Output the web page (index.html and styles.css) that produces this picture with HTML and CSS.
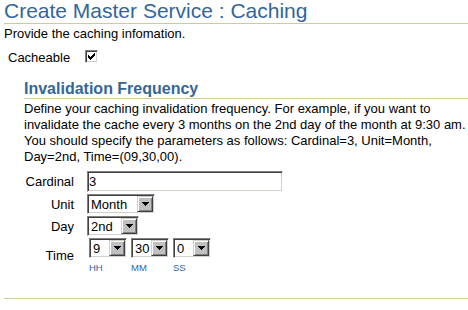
FILE: index.html
```html
<!DOCTYPE html>
<html lang="en">
<head>
<meta charset="utf-8">
<title>Create Master Service : Caching</title>
<link rel="stylesheet" href="styles.css">
</head>
<body>
<div class="page">
  <h1 class="title">Create Master Service : Caching</h1>
  <p class="intro">Provide the caching infomation.</p>
  <div class="check-row">
    <span class="check-label">Cacheable</span>
    <span class="checkbox"><svg width="7" height="7" viewBox="0 0 7 7" shape-rendering="crispEdges"><rect x="0" y="2" width="1" height="3"/><rect x="1" y="3" width="1" height="3"/><rect x="2" y="4" width="1" height="3"/><rect x="3" y="3" width="1" height="3"/><rect x="4" y="2" width="1" height="3"/><rect x="5" y="1" width="1" height="3"/><rect x="6" y="0" width="1" height="3"/></svg></span>
  </div>
  <div class="section">
    <h2 class="section-title">Invalidation Frequency</h2>
    <p class="desc">Define your caching invalidation frequency. For example, if you want to<br>invalidate the cache every 3 months on the 2nd day of the month at 9:30 am.<br>You should specify the parameters as follows: Cardinal=3, Unit=Month,<br>Day=2nd, Time=(09,30,00).</p>
    <div class="form">
      <span class="lbl">Cardinal</span>
      <div class="field"><input class="textbox" type="text" value="3"></div>

      <span class="lbl">Unit</span>
      <div class="field">
        <span class="select w-unit"><span class="sel-text">Month</span><span class="sel-btn"><svg width="7" height="4" viewBox="0 0 7 4" shape-rendering="crispEdges"><rect x="0" y="0" width="7" height="1"/><rect x="1" y="1" width="5" height="1"/><rect x="2" y="2" width="3" height="1"/><rect x="3" y="3" width="1" height="1"/></svg></span></span>
      </div>

      <span class="lbl">Day</span>
      <div class="field">
        <span class="select w-day"><span class="sel-text">2nd</span><span class="sel-btn"><svg width="7" height="4" viewBox="0 0 7 4" shape-rendering="crispEdges"><rect x="0" y="0" width="7" height="1"/><rect x="1" y="1" width="5" height="1"/><rect x="2" y="2" width="3" height="1"/><rect x="3" y="3" width="1" height="1"/></svg></span></span>
      </div>

      <span class="lbl lbl-time">Time</span>
      <div class="field time-group">
        <div class="time-col">
          <span class="select w-time"><span class="sel-text">9</span><span class="sel-btn"><svg width="7" height="4" viewBox="0 0 7 4" shape-rendering="crispEdges"><rect x="0" y="0" width="7" height="1"/><rect x="1" y="1" width="5" height="1"/><rect x="2" y="2" width="3" height="1"/><rect x="3" y="3" width="1" height="1"/></svg></span></span>
          <span class="hint">HH</span>
        </div>
        <div class="time-col">
          <span class="select w-time"><span class="sel-text">30</span><span class="sel-btn"><svg width="7" height="4" viewBox="0 0 7 4" shape-rendering="crispEdges"><rect x="0" y="0" width="7" height="1"/><rect x="1" y="1" width="5" height="1"/><rect x="2" y="2" width="3" height="1"/><rect x="3" y="3" width="1" height="1"/></svg></span></span>
          <span class="hint">MM</span>
        </div>
        <div class="time-col">
          <span class="select w-time"><span class="sel-text">0</span><span class="sel-btn"><svg width="7" height="4" viewBox="0 0 7 4" shape-rendering="crispEdges"><rect x="0" y="0" width="7" height="1"/><rect x="1" y="1" width="5" height="1"/><rect x="2" y="2" width="3" height="1"/><rect x="3" y="3" width="1" height="1"/></svg></span></span>
          <span class="hint">SS</span>
        </div>
      </div>
    </div>
  </div>
  <div class="footer-line"></div>
</div>
</body>
</html>
```

FILE: styles.css
```css
body {
  margin: 0;
  font-family: "Liberation Sans", Arial, sans-serif;
  font-size: 13px;
  color: #000;
  background: #fff;
}

.page {
  padding-left: 4px;
}

.title {
  margin: 0;
  font-size: 21px;
  font-weight: normal;
  color: #336699;
  line-height: 21px;
  padding-bottom: 2px;
  border-bottom: 1px solid #cccc99;
}

.intro {
  margin: 2px 0 0;
  line-height: 16px;
}

.check-row {
  display: flex;
  align-items: flex-start;
  margin-top: 8px;
  padding-left: 4px;
  height: 16px;
}

.check-label {
  width: 77px;
  line-height: 16px;
}

.checkbox {
  width: 13px;
  height: 13px;
  box-sizing: border-box;
  border: 1px solid;
  border-color: #808080 #fff #fff #808080;
  box-shadow: inset 1px 1px #404040, inset -1px -1px #d4d0c8;
  background: #fff;
  display: flex;
  align-items: center;
  justify-content: center;
}

.checkbox svg {
  display: block;
  fill: #000;
}

.section {
  margin: 14px 0 0 20px;
}

.section-title {
  margin: 0;
  font-size: 16px;
  font-weight: bold;
  color: #336699;
  line-height: 18px;
  border-bottom: 1px solid #cccc99;
}

.desc {
  margin: 2px 0 0;
  line-height: 16px;
  white-space: nowrap;
}

.form {
  display: grid;
  grid-template-columns: 50px auto;
  column-gap: 13px;
  row-gap: 2px;
  margin-top: 6px;
  justify-content: start;
  align-items: start;
}

.lbl {
  text-align: right;
  line-height: 16px;
  padding-top: 3px;
  white-space: nowrap;
}

.lbl-time {
  align-self: center;
  padding-top: 0;
}

.field {
  display: flex;
}

.textbox {
  width: 196px;
  height: 21px;
  box-sizing: border-box;
  margin: 0;
  padding: 0 1px;
  border: 1px solid;
  border-color: #808080 #fff #fff #808080;
  box-shadow: inset 1px 1px #404040, inset -1px -1px #d4d0c8;
  font: inherit;
  font-size: 13px;
  color: #000;
  background: #fff;
  outline: none;
}

.select {
  display: flex;
  height: 20px;
  box-sizing: border-box;
  padding: 1px;
  border: 1px solid;
  border-color: #808080 #fff #fff #808080;
  box-shadow: inset 1px 1px #404040, inset -1px -1px #d4d0c8;
  background: #fff;
}

.sel-text {
  flex: 1;
  min-width: 0;
  overflow: hidden;
  padding: 1px 0 0 2px;
  line-height: 15px;
  white-space: nowrap;
}

.sel-btn {
  width: 16px;
  height: 16px;
  flex: none;
  box-sizing: border-box;
  border: 1px solid;
  border-color: #d4d0c8 #404040 #404040 #d4d0c8;
  box-shadow: inset 1px 1px #fff, inset -1px -1px #808080;
  background: #c0c0c0;
  display: flex;
  align-items: center;
  justify-content: center;
}

.sel-btn svg {
  display: block;
  fill: #000;
}

.w-unit { width: 68px; }
.w-day { width: 52px; }
.w-time { width: 38px; }

.time-group {
  gap: 4px;
  padding-left: 2px;
}

.time-col {
  display: flex;
  flex-direction: column;
}

.hint {
  font-size: 9.5px;
  line-height: 11px;
  margin-top: 4px;
  color: #336699;
}

.footer-line {
  border-top: 1px solid #cccc99;
  margin-top: 25px;
}
```
